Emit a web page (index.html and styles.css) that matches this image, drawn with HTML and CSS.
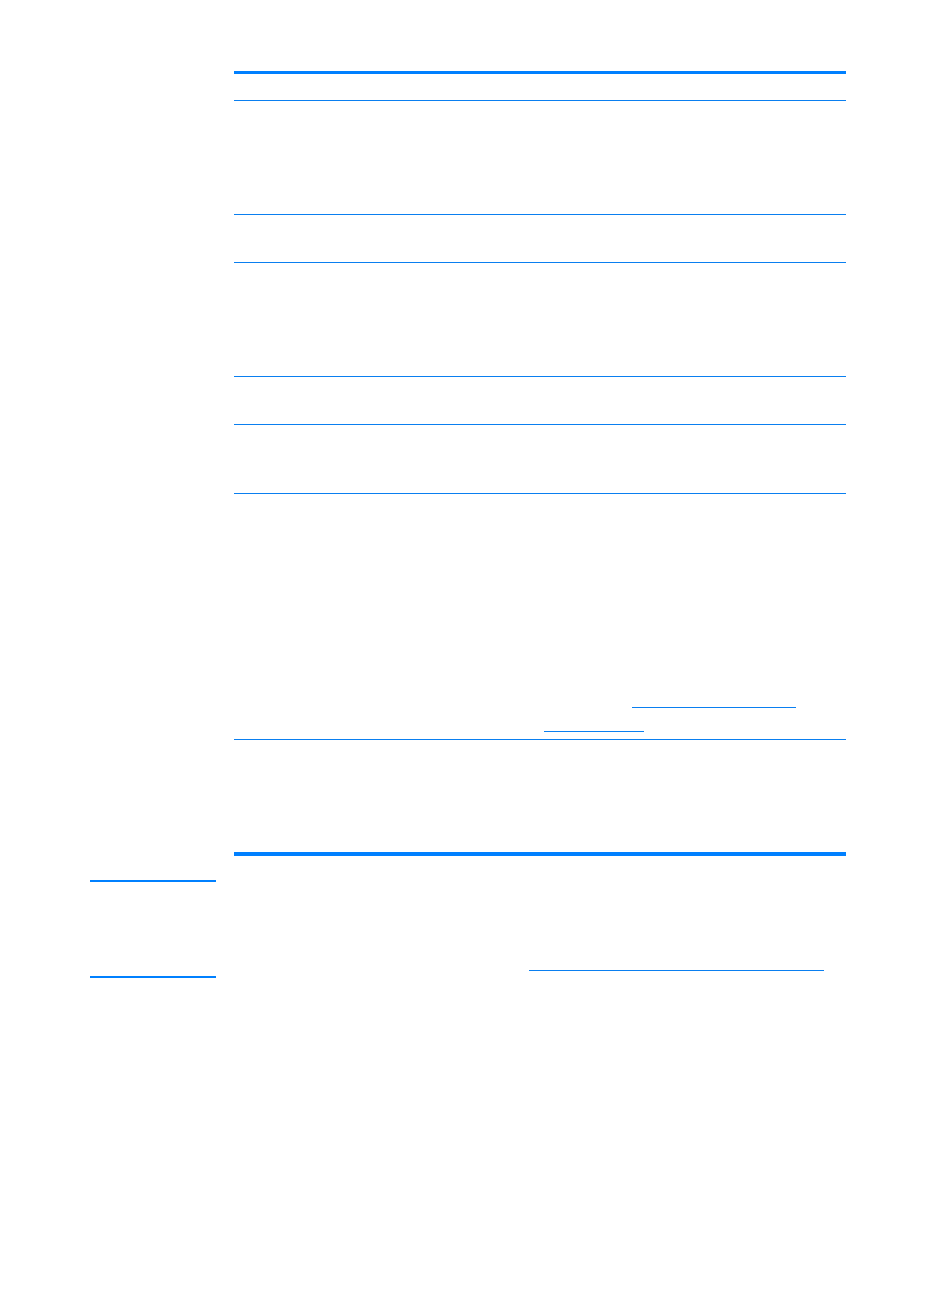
FILE: index.html
```html
<!DOCTYPE html>
<html lang="en">
<head>
<meta charset="utf-8">
<title>Table page</title>
<link rel="stylesheet" href="styles.css">
</head>
<body>
<div class="page">
  <div class="table">
    <div class="row row-head"></div>
    <div class="row row-tall"></div>
    <div class="row row-short"></div>
    <div class="row row-tall"></div>
    <div class="row row-short"></div>
    <div class="row row-mid"></div>
    <div class="row row-links">
      <div class="link-line"><span class="ul ul-a"></span></div>
      <div class="link-line"><span class="ul ul-b"></span></div>
    </div>
    <div class="row row-last"></div>
  </div>
  <div class="note">
    <div class="note-label"></div>
    <div class="note-body">
      <span class="ul ul-c"></span>
    </div>
  </div>
</div>
</body>
</html>
```
FILE: styles.css
```css
html, body {
  margin: 0;
  padding: 0;
  background: #ffffff;
  font-family: "Liberation Sans", Arial, sans-serif;
}
.page {
  padding-top: 71px;
}
.table {
  margin-left: 234px;
  width: 612px;
  border-top: 3px solid #0080ff;
  border-bottom: 4px solid #0080ff;
  display: flex;
  flex-direction: column;
}
.row {
  border-bottom: 1px solid #0a7ff0;
}
.row-head { height: 26px; }
.row-tall { height: 113px; }
.row-short { height: 47px; }
.row-mid { height: 68px; }
.row-links {
  display: flex;
  flex-direction: column;
  justify-content: flex-end;
  padding-bottom: 7px;
  box-sizing: border-box;
  height: 246px;
}
.row-last {
  height: 112px;
  border-bottom: none;
}
.link-line {
  height: 23px;
  display: flex;
  align-items: flex-end;
}
.ul {
  display: block;
  border-bottom: 1px solid #0a7ff0;
}
.ul-a { margin-left: 398px; width: 164px; margin-bottom: 1px; }
.ul-b { margin-left: 310px; width: 100px; }
.note {
  display: flex;
  padding-left: 90px;
  margin-top: 24px;
}
.note-label {
  width: 126px;
  height: 94px;
  border-top: 2px solid #0080ff;
  border-bottom: 2px solid #0080ff;
}
.note-body {
  margin-left: 18px;
  padding-top: 90px;
}
.ul-c { margin-left: 295px; width: 295px; }
```
